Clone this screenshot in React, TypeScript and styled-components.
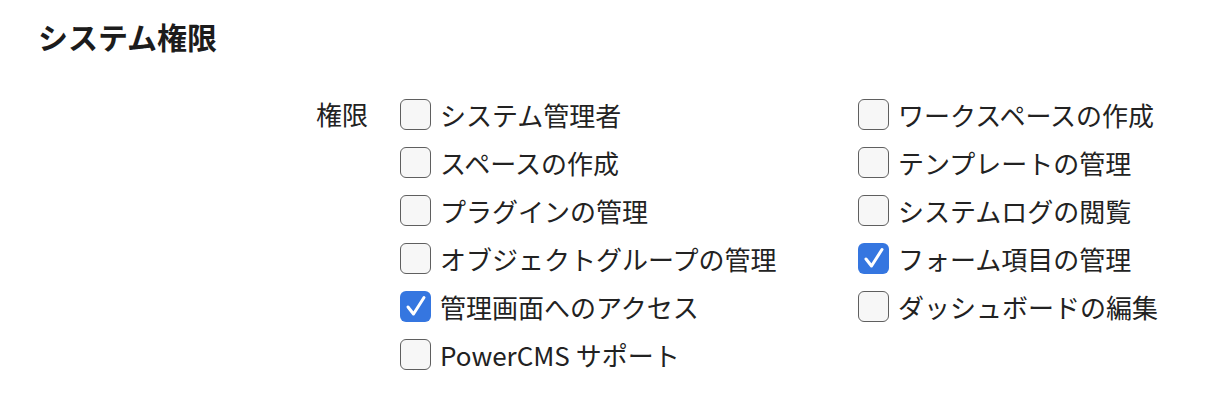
import styled, { createGlobalStyle } from 'styled-components';

interface Permission {
  label: string;
  checked: boolean;
}

const leftColumn: Permission[] = [
  { label: 'システム管理者', checked: false },
  { label: 'スペースの作成', checked: false },
  { label: 'プラグインの管理', checked: false },
  { label: 'オブジェクトグループの管理', checked: false },
  { label: '管理画面へのアクセス', checked: true },
  { label: 'PowerCMS サポート', checked: false },
];

const rightColumn: Permission[] = [
  { label: 'ワークスペースの作成', checked: false },
  { label: 'テンプレートの管理', checked: false },
  { label: 'システムログの閲覧', checked: false },
  { label: 'フォーム項目の管理', checked: true },
  { label: 'ダッシュボードの編集', checked: false },
];

const GlobalStyle = createGlobalStyle`
  body {
    margin: 0;
    background: #ffffff;
    font-family: "Noto Sans CJK JP", "Noto Sans", sans-serif;
    color: #222222;
  }
`;

const Page = styled.div`
  padding: 18px 38px;
`;

const Title = styled.h2`
  margin: 0;
  font-size: 30px;
  line-height: 36px;
  font-weight: 700;
  color: #1c1c1c;
`;

const Section = styled.div`
  display: grid;
  grid-template-columns: 362px 458px auto;
  margin-top: 36px;
`;

const FieldLabel = styled.div`
  text-align: right;
  padding-right: 32px;
  font-size: 26px;
  line-height: 48px;
  height: 48px;
`;

const List = styled.div`
  display: flex;
  flex-direction: column;
`;

const Row = styled.label`
  display: flex;
  align-items: center;
  gap: 9px;
  height: 48px;
  font-size: 26px;
  white-space: nowrap;
`;

const Box = styled.span<{ $checked: boolean }>`
  display: flex;
  align-items: center;
  justify-content: center;
  width: 31px;
  height: 31px;
  box-sizing: border-box;
  border-radius: 6px;
  flex-shrink: 0;
  border: ${p => (p.$checked ? 'none' : '1.5px solid #5f5f5f')};
  background: ${p => (p.$checked ? '#3576e0' : '#f7f7f7')};
`;

const Check = () => (
  <svg width="26" height="26" viewBox="0 0 26 26">
    <path d="M5 14 L10.5 21 L21 4.5" fill="none" stroke="#ffffff" strokeWidth="3" strokeLinecap="round" strokeLinejoin="round" />
  </svg>
);

const PermissionList = ({ items }: { items: Permission[] }) => (
  <List>
    {items.map(item => (
      <Row key={item.label}>
        <Box $checked={item.checked}>{item.checked && <Check />}</Box>
        <span>{item.label}</span>
      </Row>
    ))}
  </List>
);

const App = () => (
  <Page>
    <GlobalStyle />
    <Title>システム権限</Title>
    <Section>
      <FieldLabel>権限</FieldLabel>
      <PermissionList items={leftColumn} />
      <PermissionList items={rightColumn} />
    </Section>
  </Page>
);

export default App;
